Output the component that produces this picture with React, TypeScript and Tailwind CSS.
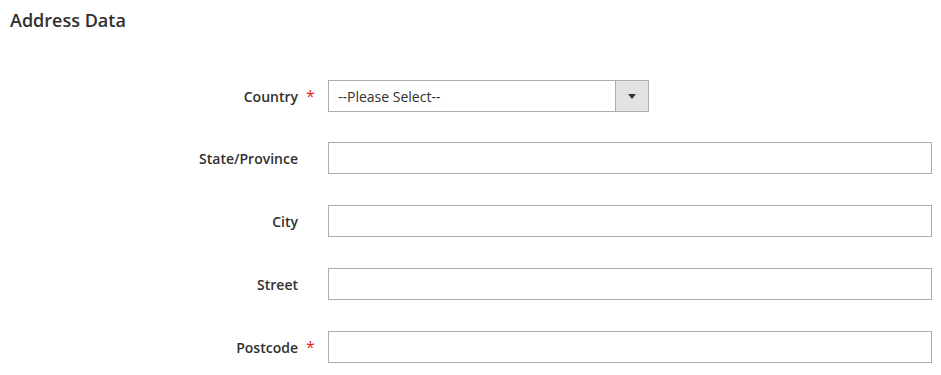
import React from "react";

const font = { fontFamily: '"Open Sans", "Liberation Sans", sans-serif' };

function Row({ label, required, children }: { label: string; required?: boolean; children: React.ReactNode }) {
  return (
    <div className="flex items-center h-[32px]">
      <div className="w-[298px] text-right text-[14px] font-semibold text-[#303030]">{label}</div>
      <div className="w-[30px] pl-[8px] text-[#e22626] text-[16px] leading-none -mt-[1px]">{required ? "*" : ""}</div>
      {children}
    </div>
  );
}

export default function App() {
  return (
    <div className="w-[941px] h-[375px] bg-white" style={font}>
      <div className="pl-[10px] pt-[8px] text-[18px] font-semibold text-[#303030] leading-[24px]">Address Data</div>
      <div className="mt-[48px] flex flex-col">
        <Row label="Country" required>
          <div className="w-[321px] h-[32px] border border-[#adadad] flex items-stretch">
            <div className="flex-1 pl-[9px] flex items-center text-[14px] text-[#303030]">--Please Select--</div>
            <div className="w-[33px] bg-[#e3e3e3] border-l border-[#adadad] flex items-center justify-center">
              <svg width="8" height="5" viewBox="0 0 8 5"><path d="M0 0h8L4 5z" fill="#333" /></svg>
            </div>
          </div>
        </Row>
        <div className="flex flex-col gap-[31px] mt-[30px]">
          <Row label="State/Province">
            <div className="w-[604px] h-[32px] border border-[#adadad]" />
          </Row>
          <Row label="City">
            <div className="w-[604px] h-[32px] border border-[#adadad]" />
          </Row>
          <Row label="Street">
            <div className="w-[604px] h-[32px] border border-[#adadad]" />
          </Row>
          <Row label="Postcode" required>
            <div className="w-[604px] h-[32px] border border-[#adadad]" />
          </Row>
        </div>
      </div>
    </div>
  );
}
